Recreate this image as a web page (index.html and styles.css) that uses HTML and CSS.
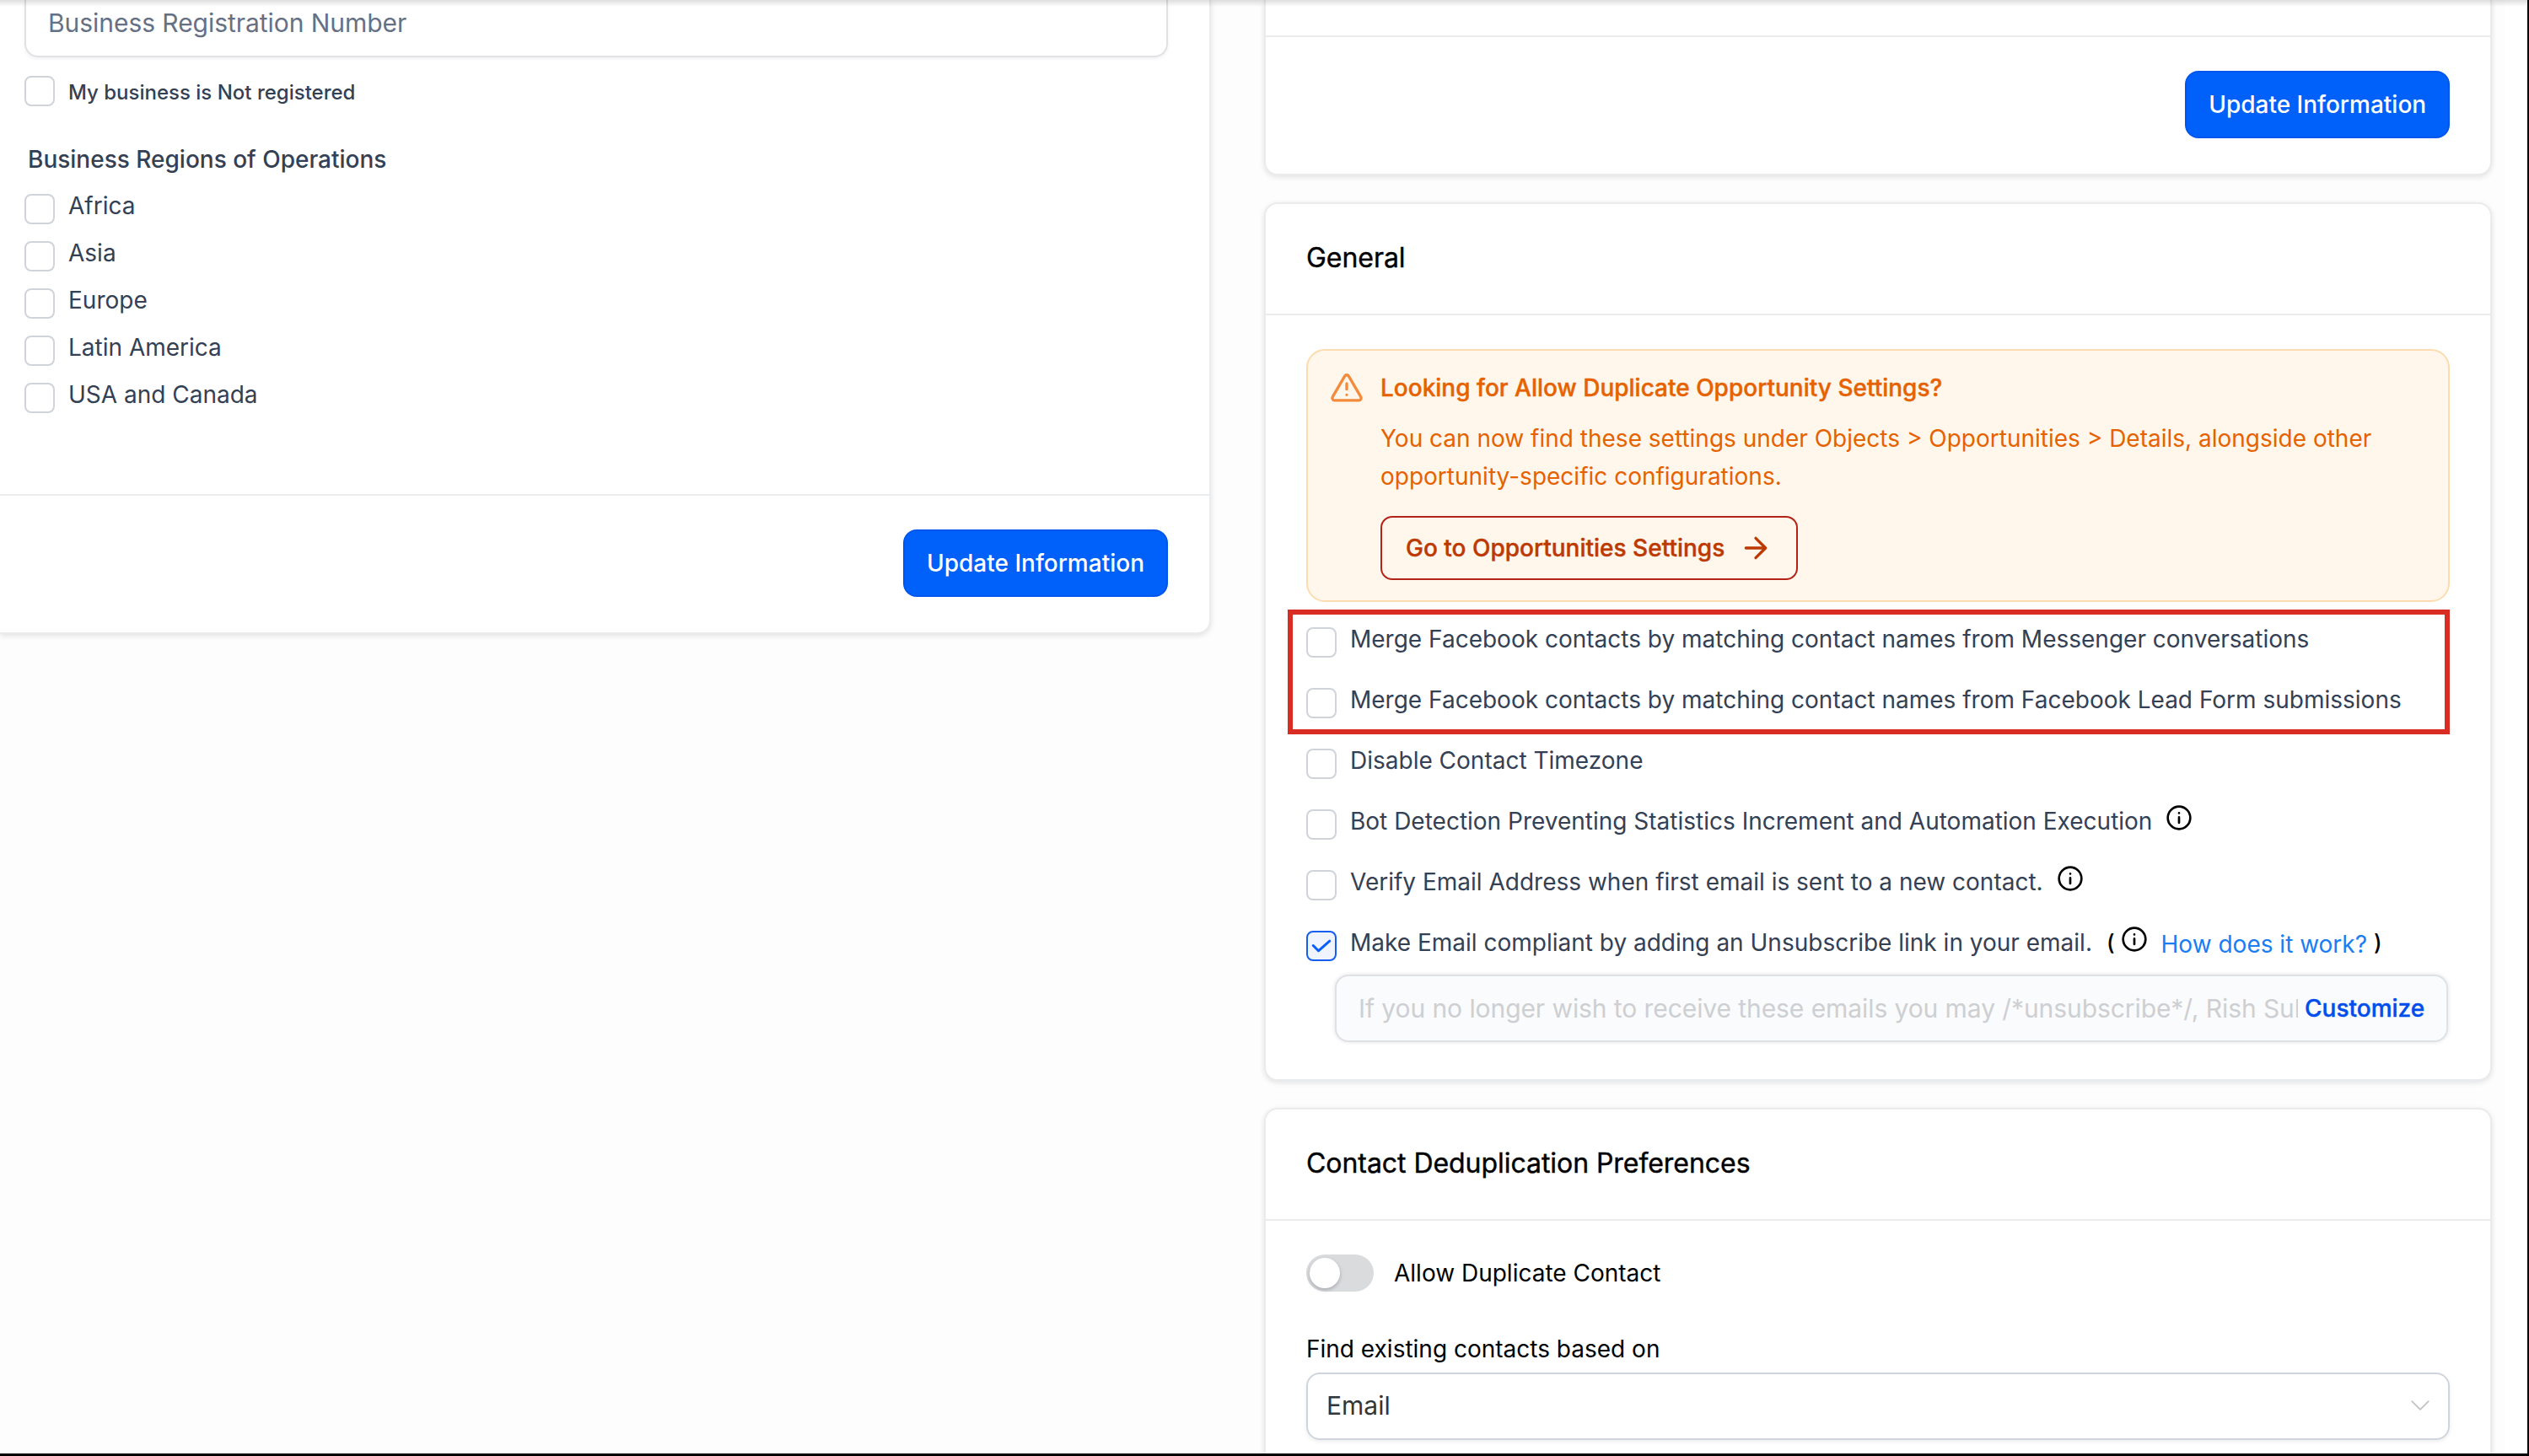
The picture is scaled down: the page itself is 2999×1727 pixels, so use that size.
FILE: index.html
```html
<!DOCTYPE html>
<html lang="en">
<head>
    <meta charset="UTF-8">
    <meta name="viewport" content="width=device-width, initial-scale=1.0">
    <title>Business Profile</title>
    <link rel="stylesheet" href="styles.css">
</head>
<body>
    <div class="page">
        <div class="top-shadow"></div>

        <!-- Left: business information -->
        <div class="left-column">
            <div class="card card-left">
                <div class="business-body">
                    <div class="text-input">Business Registration Number</div>
                    <div class="check-row not-registered">
                        <span class="checkbox"></span>
                        <span class="label">My business is Not registered</span>
                    </div>
                    <h4 class="regions-title">Business Regions of Operations</h4>
                    <div class="regions">
                        <div class="check-row"><span class="checkbox"></span><span class="label">Africa</span></div>
                        <div class="check-row"><span class="checkbox"></span><span class="label">Asia</span></div>
                        <div class="check-row"><span class="checkbox"></span><span class="label">Europe</span></div>
                        <div class="check-row"><span class="checkbox"></span><span class="label">Latin America</span></div>
                        <div class="check-row"><span class="checkbox"></span><span class="label">USA and Canada</span></div>
                    </div>
                </div>
                <div class="card-footer">
                    <button class="btn-primary">Update Information</button>
                </div>
            </div>
        </div>

        <!-- Right: settings cards -->
        <div class="right-column">
            <div class="card card-cut">
                <div class="cut-space"></div>
                <div class="card-footer">
                    <button class="btn-primary">Update Information</button>
                </div>
            </div>

            <div class="card">
                <h3 class="card-header">General</h3>
                <div class="card-body">
                    <div class="alert">
                        <svg class="alert-icon" viewBox="0 0 24 24">
                            <path d="M10.6 3.7 2 18.4A1.6 1.6 0 0 0 3.4 20.9h17.2a1.6 1.6 0 0 0 1.4-2.5L13.4 3.7a1.6 1.6 0 0 0-2.8 0z"/>
                            <path d="M12 9v4M12 17h.01"/>
                        </svg>
                        <div class="alert-content">
                            <div class="alert-title">Looking for Allow Duplicate Opportunity Settings?</div>
                            <p class="alert-text">You can now find these settings under Objects &gt; Opportunities &gt; Details, alongside other<br>opportunity-specific configurations.</p>
                            <button class="btn-outline">
                                <span>Go to Opportunities Settings</span>
                                <svg viewBox="0 0 24 24"><path d="M5 12h14M12 5l7 7-7 7"/></svg>
                            </button>
                        </div>
                    </div>

                    <div class="options">
                        <div class="highlight"></div>
                        <div class="check-row"><span class="checkbox"></span><span class="label">Merge Facebook contacts by matching contact names from Messenger conversations</span></div>
                        <div class="check-row"><span class="checkbox"></span><span class="label">Merge Facebook contacts by matching contact names from Facebook Lead Form submissions</span></div>
                        <div class="check-row"><span class="checkbox"></span><span class="label">Disable Contact Timezone</span></div>
                        <div class="check-row">
                            <span class="checkbox"></span><span class="label">Bot Detection Preventing Statistics Increment and Automation Execution</span>
                            <svg class="info" viewBox="0 0 24 24"><circle cx="12" cy="12" r="10"/><path d="M12 16.5v-5M12 7.8h.01"/></svg>
                        </div>
                        <div class="check-row">
                            <span class="checkbox"></span><span class="label">Verify Email Address when first email is sent to a new contact.</span>
                            <svg class="info" viewBox="0 0 24 24"><circle cx="12" cy="12" r="10"/><path d="M12 16.5v-5M12 7.8h.01"/></svg>
                        </div>
                        <div class="check-row">
                            <span class="checkbox checked"><svg viewBox="0 0 36 36"><path d="M7 17.5l7 7L29 11.5"/></svg></span>
                            <span class="label">Make Email compliant by adding an Unsubscribe link in your email.</span>
                            <span class="paren open">(</span>
                            <svg class="info info-paren" viewBox="0 0 24 24"><circle cx="12" cy="12" r="10"/><path d="M12 16.5v-5M12 7.8h.01"/></svg>
                            <a class="how-link">How does it work?</a>
                            <span class="paren close">)</span>
                        </div>
                    </div>

                    <div class="unsubscribe-input">
                        <span class="unsubscribe-text">If you no longer wish to receive these emails you may /*unsubscribe*/, Rish Sub</span>
                        <a class="customize">Customize</a>
                    </div>
                </div>
            </div>

            <div class="card card-last">
                <h3 class="card-header">Contact Deduplication Preferences</h3>
                <div class="card-body">
                    <div class="toggle-row">
                        <span class="toggle"><span class="knob"></span></span>
                        <span>Allow Duplicate Contact</span>
                    </div>
                    <div class="field-label">Find existing contacts based on</div>
                    <div class="select">
                        <span>Email</span>
                        <svg viewBox="0 0 20 12"><path d="M1 1l9 9 9-9"/></svg>
                    </div>
                </div>
            </div>
        </div>
    </div>
</body>
</html>
```
FILE: styles.css
```css
* {
    box-sizing: border-box;
}

body {
    margin: 0;
    font-family: Inter, "Liberation Sans", sans-serif;
    font-size: 28px;
    color: #000;
    overflow: hidden;
}

h3, h4, p {
    margin: 0;
    font-weight: 500;
}

button {
    font-family: inherit;
    font-size: 28px;
    font-weight: 500;
}

svg {
    fill: none;
    stroke: currentColor;
    stroke-linecap: round;
    stroke-linejoin: round;
    flex-shrink: 0;
}

.page {
    position: relative;
    display: flex;
    gap: 63px;
    width: 2999px;
    height: 1727px;
    padding-right: 42px;
    background: linear-gradient(to right, #fdfdfd 2970px, #fff 2970px);
    border-right: 2px solid #000;
    border-bottom: 3px solid #000;
    overflow: hidden;
}

.top-shadow {
    position: absolute;
    top: 0;
    left: 0;
    right: 0;
    height: 8px;
    background: linear-gradient(rgba(0, 0, 0, 0.13), rgba(0, 0, 0, 0));
}

.left-column {
    width: 1436px;
    flex-shrink: 0;
}

.right-column {
    flex: 1;
    display: flex;
    flex-direction: column;
    gap: 32px;
}

/* Cards */
.card {
    flex-shrink: 0;
    background: #fff;
    border: 2px solid #eaebed;
    border-radius: 16px;
    box-shadow: 0 2px 6px rgba(16, 24, 40, 0.12);
}

.card-left {
    display: flex;
    flex-direction: column;
    height: 752px;
    border-left: none;
    border-top: none;
    border-radius: 0 0 16px 0;
}

.card-cut {
    border-top: none;
    border-radius: 0 0 16px 16px;
}

.card-last {
    height: 500px;
}

.cut-space {
    height: 42px;
}

.card-header {
    height: 132px;
    padding-left: 48px;
    border-bottom: 2px solid #eaebed;
    font-size: 32px;
    font-weight: 400;
    letter-spacing: -0.05px;
    line-height: 128px;
    -webkit-text-stroke: 0.4px currentColor;
}

.card-body {
    padding: 40px 48px 44px;
}

.card-footer {
    display: flex;
    justify-content: flex-end;
    padding: 40px 48px 42px;
    border-top: 2px solid #eaebed;
}

.card-left .card-footer {
    padding-right: 49px;
}

.btn-primary {
    width: 314px;
    height: 80px;
    padding: 0;
    color: #fff;
    background: #0060fa;
    border: 2px solid #0055ee;
    border-radius: 16px;
}

/* Business information */
.business-body {
    flex: 1;
    padding: 0 49px 0 29px;
}

.text-input {
    height: 68px;
    padding-left: 26px;
    border: 2px solid #dfe1e5;
    border-top: none;
    border-radius: 0 0 16px 16px;
    box-shadow: 0 2px 4px rgba(16, 24, 40, 0.06);
    font-size: 30px;
    letter-spacing: -0.05px;
    line-height: 54px;
    color: #667085;
}

.check-row {
    display: flex;
    height: 36px;
}

.checkbox {
    width: 36px;
    height: 36px;
    flex-shrink: 0;
    background: #fff;
    border: 2px solid #d0d3da;
    border-radius: 8px;
}

.checkbox.checked {
    background: #eff4ff;
    border-color: #155eef;
}

.checkbox.checked svg {
    display: block;
    width: 32px;
    height: 32px;
    color: #0a5ffa;
    stroke-width: 3.4;
}

.label {
    height: 36px;
    margin: -4px 0 0 16px;
    line-height: 36px;
    color: #344054;
    white-space: nowrap;
}

.not-registered {
    margin-top: 22px;
}

.not-registered .label {
    margin-top: 2px;
    font-size: 24px;
    font-weight: 500;
}

.regions-title {
    margin: 43px 0 21px 4px;
    font-size: 28px;
    line-height: 40px;
    color: #344054;
}

.regions {
    display: flex;
    flex-direction: column;
    gap: 20px;
}

/* Alert */
.alert {
    display: flex;
    height: 300px;
    padding: 22px 26px;
    background: #fff7eb;
    border: 2px solid #fcdcae;
    border-radius: 22px;
    color: #e66200;
}

.alert-icon {
    width: 40px;
    height: 40px;
    margin-top: 2px;
    color: #f38b3c;
    stroke-width: 2;
}

.alert-content {
    margin-left: 20px;
}

.alert-title {
    margin-top: 1px;
    font-weight: 500;
    line-height: 42px;
    -webkit-text-stroke: 0.4px currentColor;
}

.alert-text {
    margin-top: 17px;
    font-weight: 400;
    line-height: 45px;
    white-space: nowrap;
}

.btn-outline {
    display: flex;
    align-items: center;
    gap: 17px;
    width: 495px;
    height: 76px;
    margin-top: 24px;
    padding: 0 0 0 28px;
    background: transparent;
    border: 2px solid #b42318;
    border-radius: 14px;
    font-weight: 500;
    color: #bc3a02;
    white-space: nowrap;
}

.btn-outline span {
    -webkit-text-stroke: 0.4px currentColor;
}

.btn-outline svg {
    width: 40px;
    height: 40px;
    stroke-width: 2;
}

/* General options */
.options {
    position: relative;
    display: flex;
    flex-direction: column;
    gap: 36px;
    margin-top: 30px;
}

.highlight {
    position: absolute;
    top: -21px;
    left: -22px;
    width: 1378px;
    height: 148px;
    border: 6px solid #d92d24;
}

.info {
    width: 32px;
    height: 32px;
    margin: -6px 0 0 16px;
    stroke-width: 2;
}

.paren {
    margin-top: -4px;
    line-height: 36px;
    font-weight: 500;
    font-size: 26px;
}

.paren.open {
    margin-left: 17px;
}

.paren.close {
    margin-left: 8px;
}

.info-paren {
    margin-left: 7px;
}

.how-link {
    margin: -2px 0 0 16px;
    line-height: 36px;
    color: #1a7df5;
}

.unsubscribe-input {
    display: flex;
    align-items: center;
    height: 80px;
    margin: 16px 2px 0 34px;
    padding: 0 26px;
    background: #fafbfc;
    border: 2px solid #dfe1e5;
    border-radius: 16px;
    box-shadow: 0 0 5px rgba(16, 24, 40, 0.12);
}

.unsubscribe-text {
    width: 1114px;
    flex-shrink: 0;
    overflow: hidden;
    white-space: nowrap;
    font-size: 30px;
    letter-spacing: -0.08px;
    line-height: 44px;
    color: #cdcfd2;
}

.customize {
    margin-left: 8px;
    font-weight: 500;
    color: #004eeb;
    -webkit-text-stroke: 0.4px currentColor;
}

/* Contact deduplication */
.toggle-row {
    display: flex;
    align-items: center;
    gap: 24px;
    height: 44px;
}

.toggle {
    width: 80px;
    height: 44px;
    padding: 4px;
    background: #d9dbdd;
    border-radius: 22px;
}

.knob {
    display: block;
    width: 36px;
    height: 36px;
    background: #fff;
    border-radius: 50%;
    box-shadow: 0 2px 4px rgba(16, 24, 40, 0.25);
}

.field-label {
    margin: 48px 0 8px;
    line-height: 40px;
}

.select {
    display: flex;
    align-items: center;
    justify-content: space-between;
    height: 80px;
    padding: 0 22px 2px;
    border: 2px solid #d0d5dd;
    border-radius: 16px;
    box-shadow: 0 2px 4px rgba(16, 24, 40, 0.08);
    font-size: 30px;
    color: #333639;
}

.select svg {
    width: 22px;
    height: 13px;
    color: #c2c2c2;
    stroke-width: 1.6;
}
```
